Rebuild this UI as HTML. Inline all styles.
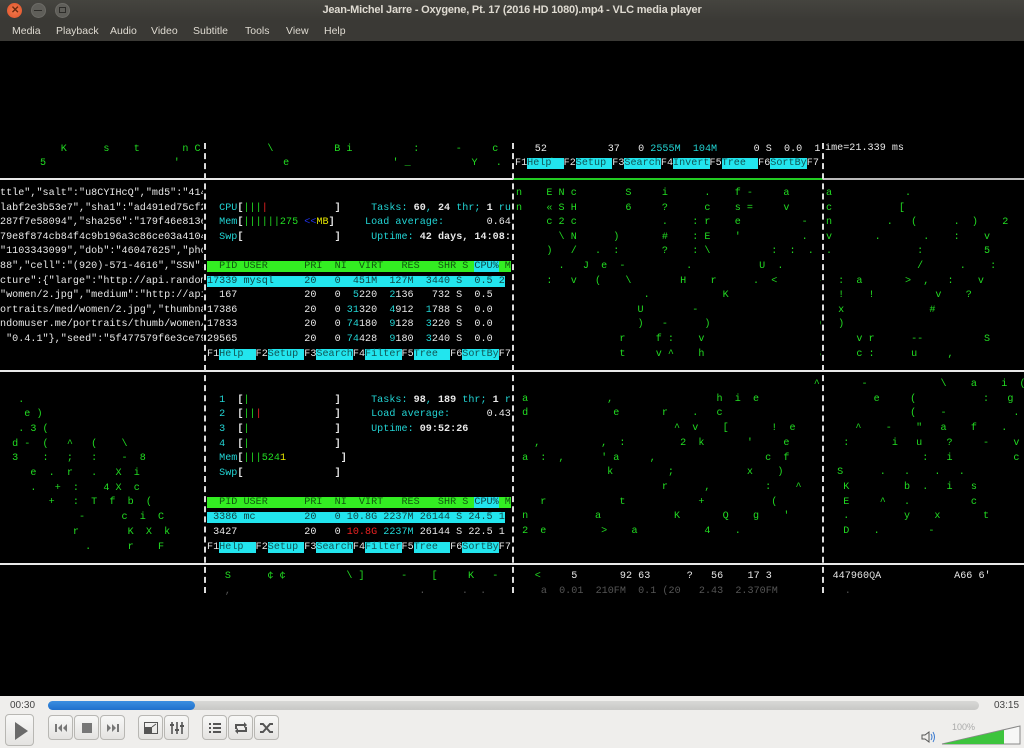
<!DOCTYPE html>
<html><head><meta charset="utf-8"><style>
*{margin:0;padding:0;box-sizing:border-box}
body{width:1024px;height:748px;overflow:hidden;background:#000;font-family:"Liberation Sans",sans-serif;position:relative}
#title{position:absolute;left:0;top:0;width:1024px;height:21px;background:linear-gradient(#45443f,#3a3935);color:#dfdbd2;font-size:11px;font-weight:bold;text-align:center;line-height:21px;letter-spacing:-0.2px}
.wb{position:absolute;top:3px;width:15px;height:15px;border-radius:50%}
#menu{position:absolute;left:0;top:21px;width:1024px;height:20px;background:#3a3935;color:#dfdbd2;font-size:10.5px;line-height:20px}
#menu span{position:absolute}
pre{position:absolute;font-family:"Liberation Mono",monospace;font-size:10.1px;letter-spacing:0.02px;white-space:pre;color:#22dd22;overflow:hidden}
.c{color:#22d4d4}.w{color:#e8e8e8}.b{font-weight:bold}.y{color:#e8e800}.r{color:#ee2222}.bl{color:#2233ee}
.hg{background:#33ee22;color:#115511}.hc{background:#22e5ee;color:#114444}.k{background:#22e5ee;color:#115555}.fw{color:#e8e8e8}
.hl{position:absolute;height:2px;background:#e8e8e8}
.vl{position:absolute;width:0;border-left:2px dashed #dcdcdc}
#ctl{position:absolute;left:0;top:696px;width:1024px;height:52px;background:#efeeec}
.btn{position:absolute;top:19px;height:25px;width:25px;border:1px solid #b8b7b3;border-radius:4px;background:linear-gradient(#f8f8f7,#e4e3e1)}
.btn svg{position:absolute;left:4px;top:4px}
</style></head><body>
<div id="title">Jean-Michel Jarre - Oxygene, Pt. 17 (2016 HD 1080).mp4 - VLC media player
<div class="wb" style="left:7px;background:radial-gradient(#f47a4c,#e0522a);"></div>
<div style="position:absolute;left:11px;top:0;color:#6b2a10;font-size:10px">✕</div>
<div class="wb" style="left:31px;background:#5f5e59;border:1px solid #6c6b66"></div>
<div style="position:absolute;left:34px;top:10px;width:8px;height:1px;background:#2d2c29"></div>
<div class="wb" style="left:55px;background:#5f5e59;border:1px solid #6c6b66"></div>
<div style="position:absolute;left:59px;top:7px;width:7px;height:6px;border:1px solid #2d2c29"></div>
</div>
<div id="menu">
<span style="left:12px">Media</span><span style="left:56px">Playback</span><span style="left:110px">Audio</span><span style="left:151px">Video</span><span style="left:193px">Subtitle</span><span style="left:245px">Tools</span><span style="left:286px">View</span><span style="left:324px">Help</span>
</div>

<div class="hl" style="left:0;top:178px;width:513px"></div>
<div class="hl" style="left:513px;top:178px;width:310px;background:#22cc22"></div>
<div class="hl" style="left:823px;top:178px;width:201px;background:#bbb"></div>
<div class="hl" style="left:0;top:370px;width:1024px"></div>
<div class="hl" style="left:0;top:563px;width:1024px"></div>
<div class="vl" style="left:204px;top:143px;height:450px"></div>
<div class="vl" style="left:512px;top:143px;height:450px"></div>
<div class="vl" style="left:822px;top:143px;height:450px"></div>

<pre style="left:0;top:143px;line-height:14.6px">          K      s    t       n C           \          B i          :      -     c      <span class="w">52</span>          <span class="w">37   0</span> <span class="c">2555M  104M</span>      <span class="w">0 S  0.0  1</span></pre>
<pre style="left:40px;top:157px;line-height:14.6px">5                     '                 e                 ' _          Y   .    .   b</pre>
<pre class="w" style="left:825px;top:143px">ime=21.339 ms</pre>
<pre class="fw" style="left:515px;top:158px">F1<span class="k">Help  </span>F2<span class="k">Setup </span>F3<span class="k">Search</span>F4<span class="k">Invert</span>F5<span class="k">Tree  </span>F6<span class="k">SortBy</span>F7</pre>

<pre class="w" style="left:0;top:187px;width:203px;text-align:right;line-height:14.6px">ttle","salt":"u8CYIHcQ","md5":"414
labf2e3b53e7","sha1":"ad491ed75cf2
287f7e58094","sha256":"179f46e813e
79e8f874cb84f4c9b196a3c86ce03a4104
"1103343099","dob":"46047625","pho
88","cell":"(920)-571-4616","SSN":
cture":{"large":"http://api.random
"women/2.jpg","medium":"http://api
ortraits/med/women/2.jpg","thumbnai
ndomuser.me/portraits/thumb/women/
 "0.4.1"},"seed":"5f477579f6e3ce79</pre>

<pre class="c" style="left:207px;top:187px;line-height:14.6px">

  CPU<span class="w b">[</span><span style="color:#22dd22">|||</span><span class="r">|</span>           <span class="w b">]</span>     Tasks: <span class="w b">60</span>, <span class="w b">24</span> thr; <span class="w b">1</span> ru
  Mem<span class="w b">[</span><span style="color:#22dd22">||||||275</span> <span class="bl">&lt;&lt;</span><span class="y">MB</span><span class="w b">]</span>     Load average:       <span class="w">0.64</span>
  Swp<span class="w b">[</span>               <span class="w b">]</span>     Uptime: <span class="w b">42 days, 14:08:</span>

<span class="hg">  PID USER      PRI  NI  VIRT   RES   SHR S </span><span class="hc">CPU%</span><span class="hg"> M</span>
<span class="hc">17339 mysql     20   0  451M  127M  3440 S  0.5 2</span>
<span class="w">  167           20   0  </span>5<span class="w">220  </span>2<span class="w">136   732 S  0.5</span>
<span class="w">17386           20   0 </span>31<span class="w">320  </span>4<span class="w">912  </span>1<span class="w">788 S  0.0</span>
<span class="w">17833           20   0 </span>74<span class="w">180  </span>9<span class="w">128  </span>3<span class="w">220 S  0.0</span>
<span class="w">29565           20   0 </span>74<span class="w">428  </span>9<span class="w">180  </span>3<span class="w">240 S  0.0</span>
<span class="fw">F1<span class="k">Help  </span>F2<span class="k">Setup </span>F3<span class="k">Search</span>F4<span class="k">Filter</span>F5<span class="k">Tree  </span>F6<span class="k">SortBy</span>F7</span></pre>

<pre style="left:516px;top:187px;width:305px;line-height:14.6px">n    E N c        S     i      .    f -     a       .
n    « S H        6     ?      c    s =     v          i
     c 2 c              .    : r    e          -
       \ N      )       #    : E    '          .      :
     )   /   .  :       ?    : \          :  :  .
       .   J  e  -          .           U  .
     :   v   (    \        H    r      .  <       ^
                     .            K               -
                    U        -
                    )   -      )                  G
                 r     f :    v                   :
                 t     v ^    h                   a</pre>
<pre style="left:826px;top:187px;width:198px;line-height:14.6px">a            .
c           [
n         .   (      .  )    2
v       .       .    :    v
.              :          5
               /      .    :
  :  a       >  ,   :    v
  !    !          v    ?
  x              #
  )
     v r      --          S
     c :      u     ,</pre>

<pre class="c" style="left:207px;top:393.5px;line-height:14.7px">  1  <span class="w b">[</span><span style="color:#22dd22">|</span>              <span class="w b">]</span>     Tasks: <span class="w b">98</span>, <span class="w b">189</span> thr; <span class="w b">1</span> r
  2  <span class="w b">[</span><span style="color:#22dd22">||</span><span class="r">|</span>            <span class="w b">]</span>     Load average:      <span class="w">0.43</span>
  3  <span class="w b">[</span><span style="color:#22dd22">|</span>              <span class="w b">]</span>     Uptime: <span class="w b">09:52:26</span>
  4  <span class="w b">[</span><span style="color:#22dd22">|</span>              <span class="w b">]</span>
  Mem<span class="w b">[</span><span style="color:#22dd22">|||524</span><span class="y">1</span>         <span class="w b">]</span>
  Swp<span class="w b">[</span>               <span class="w b">]</span>

<span class="hg">  PID USER      PRI  NI  VIRT   RES   SHR S </span><span class="hc">CPU%</span><span class="hg"> M</span>
<span class="hc"> 3386 mc        20   0 10.8G 2237M 26144 S 24.5 1</span>
<span class="w"> 3427           20   0 </span><span class="r">10.8G</span> 2237M <span class="w">26144 S 22.5 1</span>
<span class="fw">F1<span class="k">Help  </span>F2<span class="k">Setup </span>F3<span class="k">Search</span>F4<span class="k">Filter</span>F5<span class="k">Tree  </span>F6<span class="k">SortBy</span>F7</span></pre>

<pre style="left:0;top:393.5px;width:203px;line-height:14.7px">   .
    e )
   . 3 (
  d -  (   ^   (    \
  3    :   ;   :    -  8
     e  .  r   .   X  i
     .   +  :    4 X  c
        +   :  T  f  b  (
             -      c  i  C
            r        K  X  k
              .      r    F</pre>
<pre style="left:516px;top:378px;width:305px;line-height:14.7px">                                                 ^
 a             ,                 h  i  e
 d              e       r    .   c
                          ^  v    [       !  e
   ,          ,  :         2  k       '     e
 a  :  ,      ' a     ,                  c  f
               k         ;            x    )
                        r      ,         :    ^
    r            t            +           (
 n           a            K       Q    g    '
 2  e         >    a           4    .</pre>
<pre style="left:825px;top:378px;width:199px;line-height:14.7px">      -            \    a    i  (
        e     (           :   g
              (    -           .
     ^    -    "   a    f    .
   :       i   u    ?     -    v
                :   i          c
  S      .   .    .   .
   K         b  .   i   s
   E     ^   .          c
   .         y    x       t
   D    .        -</pre>

<pre style="left:0;top:570px;width:1024px;line-height:14.6px">                                     S      ¢ ¢          \ ]      -    [     K   -      &lt;     <span class="w">5       92 63      ?   56    17 3          447960<span style="color:#ccc">Q</span>A            A66 6'</span></pre>
<pre style="left:0;top:585px;width:1024px;line-height:14.6px;color:#555">                                     ,                               .      .  .         a  0.01  210FM  0.1 (20   2.43  2.370FM           .   </pre>

<div id="ctl">
<div style="position:absolute;left:10px;top:4px;font-size:10px;color:#444">00:30</div>
<div style="position:absolute;left:994px;top:4px;font-size:10px;color:#444">03:15</div>
<div style="position:absolute;left:48px;top:5px;width:931px;height:9px;border-radius:5px;background:linear-gradient(#d8d8d6,#c8c8c6)"></div>
<div style="position:absolute;left:48px;top:5px;width:147px;height:9px;border-radius:5px;background:linear-gradient(#3a8ee0,#1f70cc)"></div>
<div class="btn" style="left:5px;top:18px;width:29px;height:32px"><svg width="20" height="22" style="left:6px;top:5px"><path d="M3 2 L16 11 L3 20Z" fill="#6a6a6a"/></svg></div>
<div class="btn" style="left:48px"><svg width="16" height="16"><path d="M2 4h2v8H2zM9 4 5 8l4 4zM14 4l-4 4 4 4z" fill="#777"/></svg></div>
<div class="btn" style="left:74px"><svg width="16" height="16"><rect x="3" y="3" width="10" height="10" fill="#777"/></svg></div>
<div class="btn" style="left:100px"><svg width="16" height="16"><path d="M2 4l4 4-4 4zM7 4l4 4-4 4zM12 4h2v8h-2z" fill="#777"/></svg></div>
<div class="btn" style="left:138px"><svg width="16" height="16"><rect x="1.5" y="2.5" width="13" height="11" fill="none" stroke="#555"/><rect x="2" y="7" width="7" height="6" fill="#555"/><path d="M9 7l4-3" stroke="#555"/></svg></div>
<div class="btn" style="left:164px"><svg width="16" height="16"><path d="M3 2v12M8 2v12M13 2v12" stroke="#555" stroke-width="1.6"/><path d="M1 5h4M6 10h4M11 6h4" stroke="#555" stroke-width="2"/></svg></div>
<div class="btn" style="left:202px"><svg width="16" height="16"><path d="M2 4h2M2 8h2M2 12h2M6 4h8M6 8h8M6 12h8" stroke="#555" stroke-width="2"/></svg></div>
<div class="btn" style="left:228px"><svg width="16" height="16"><path d="M3 9V5h9M13 7v4H4" fill="none" stroke="#555" stroke-width="2"/><path d="M11 2l3 3-3 3zM5 8l-3 3 3 3z" fill="#555"/></svg></div>
<div class="btn" style="left:254px"><svg width="16" height="16"><path d="M1 4h3l7 8h3M1 12h3l7-8h3" fill="none" stroke="#555" stroke-width="2"/></svg></div>
<svg style="position:absolute;left:920px;top:34px" width="16" height="14"><path d="M2 5h3l4-3v10l-4-3H2z" fill="none" stroke="#555"/><path d="M11 4q2 3 0 6M13 2q3 5 0 10" fill="none" stroke="#3a7ad0"/></svg>
<div style="position:absolute;left:952px;top:26px;font-size:9px;color:#aaa">100%</div>
<svg style="position:absolute;left:940px;top:28px" width="82" height="22"><path d="M2 20 L80 2 L80 20 Z" fill="#f7f7f6" stroke="#888"/><path d="M3 20 L64 6 L64 20 Z" fill="#3dc43d"/></svg>
</div>
</body></html>
